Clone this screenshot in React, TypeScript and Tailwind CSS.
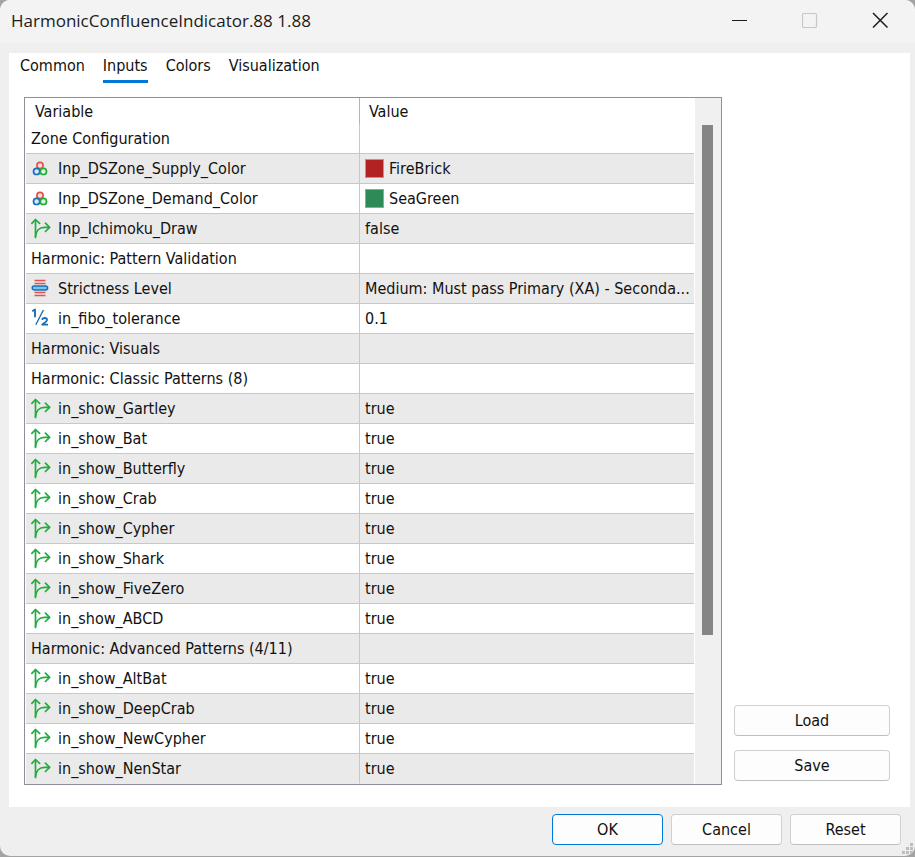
import { useState } from 'react'

type IconKind = 'color' | 'bool' | 'enum' | 'double'

interface Row {
  name: string
  icon?: IconKind
  value?: string
  swatch?: string
}

const TABS = ['Common', 'Inputs', 'Colors', 'Visualization']

const ROWS: Row[] = [
  { name: 'Zone Configuration' },
  { name: 'Inp_DSZone_Supply_Color', icon: 'color', value: 'FireBrick', swatch: 'bg-[#b22222]' },
  { name: 'Inp_DSZone_Demand_Color', icon: 'color', value: 'SeaGreen', swatch: 'bg-[#2e8b57]' },
  { name: 'Inp_Ichimoku_Draw', icon: 'bool', value: 'false' },
  { name: 'Harmonic: Pattern Validation' },
  { name: 'Strictness Level', icon: 'enum', value: 'Medium: Must pass Primary (XA) - Seconda...' },
  { name: 'in_fibo_tolerance', icon: 'double', value: '0.1' },
  { name: 'Harmonic: Visuals' },
  { name: 'Harmonic: Classic Patterns (8)' },
  { name: 'in_show_Gartley', icon: 'bool', value: 'true' },
  { name: 'in_show_Bat', icon: 'bool', value: 'true' },
  { name: 'in_show_Butterfly', icon: 'bool', value: 'true' },
  { name: 'in_show_Crab', icon: 'bool', value: 'true' },
  { name: 'in_show_Cypher', icon: 'bool', value: 'true' },
  { name: 'in_show_Shark', icon: 'bool', value: 'true' },
  { name: 'in_show_FiveZero', icon: 'bool', value: 'true' },
  { name: 'in_show_ABCD', icon: 'bool', value: 'true' },
  { name: 'Harmonic: Advanced Patterns (4/11)' },
  { name: 'in_show_AltBat', icon: 'bool', value: 'true' },
  { name: 'in_show_DeepCrab', icon: 'bool', value: 'true' },
  { name: 'in_show_NewCypher', icon: 'bool', value: 'true' },
  { name: 'in_show_NenStar', icon: 'bool', value: 'true' },
]

function TypeIcon({ kind }: { kind: IconKind }) {
  return (
    <svg width="20" height="22" viewBox="0 0 20 22" fill="none" className="shrink-0" aria-hidden="true">
      {kind === 'color' && (
        <g strokeWidth="1.7">
          <circle cx="9" cy="7.5" r="3.1" stroke="#e2514c" fill="#fbdcd8" />
          <circle cx="5.6" cy="13.4" r="3.1" stroke="#1a6fb5" fill="#d3ebfb" />
          <circle cx="12.4" cy="13.4" r="3.1" stroke="#1fae3c" fill="#dcf7df" />
        </g>
      )}
      {kind === 'bool' && (
        <g stroke="#1fae3c" strokeWidth="1.7" strokeLinecap="round" strokeLinejoin="round">
          <path d="M4.5 19.5V2" />
          <path d="M0.9 5.4L4.5 1.5L8.6 5.4" />
          <path d="M4.5 18.5C5 13 8.3 9.3 13.3 9.3H18.4" />
          <path d="M14.4 5.1L18.6 9.3L14.4 13.5" />
        </g>
      )}
      {kind === 'enum' && (
        <g>
          <path d="M3.5 2.5H14.5M3.5 5.5H14.5M3.5 14.5H14.5M3.5 17.5H14.5" stroke="#e2514c" strokeWidth="1.5" />
          <rect x="1.2" y="8.1" width="15.4" height="3.8" rx="1.9" fill="#7cc0ee" stroke="#1a6fb5" strokeWidth="1.5" />
        </g>
      )}
      {kind === 'double' && (
        <g stroke="#1a6fb5" strokeWidth="1.9" strokeLinejoin="round">
          <path d="M1.2 3.2L4 1.5V9.2" />
          <path d="M12.4 2L4.8 16.8" strokeWidth="1.4" />
          <path d="M11.2 11.8C11.6 9.4 16 9.4 16 12C16 13.6 13 15 11.2 16.6H17" />
        </g>
      )}
    </svg>
  )
}

function TitleBar() {
  return (
    <header className="flex h-[43px] items-center justify-between bg-[#f3f3f3] pl-[11px]">
      <h1 className="pb-0.5 font-['Open_Sans','Noto_Sans',sans-serif] text-[17px] text-[#1b1b1b]">
        HarmonicConfluenceIndicator.88 1.88
      </h1>
      <div className="flex h-full items-center pb-[3px]">
        <button aria-label="Minimize" className="flex h-full w-[70px] items-center justify-center">
          <svg width="16" height="16" viewBox="0 0 16 16"><path d="M0 8.5H15" stroke="#1b1b1b" /></svg>
        </button>
        <button aria-label="Maximize" disabled className="flex h-full w-[70px] items-center justify-center">
          <svg width="16" height="16" viewBox="0 0 16 16" fill="none">
            <rect x="0.5" y="1.5" width="14" height="14" rx="1.5" stroke="#c6c6c6" strokeWidth="1.2" />
          </svg>
        </button>
        <button aria-label="Close" className="flex h-full w-[70px] items-center justify-center">
          <svg width="16" height="16" viewBox="0 0 16 16"><path d="M1 1L15.5 15.5M15.5 1L1 15.5" stroke="#1b1b1b" strokeWidth="1.5" /></svg>
        </button>
      </div>
    </header>
  )
}

function InputsTable() {
  return (
    <div className="flex flex-1 border border-[#8b8f97]">
      <div className="min-w-0 flex-1 pl-px">
        <table className="w-full table-fixed border-separate border-spacing-0 text-left">
          <thead>
            <tr className="h-[26px]">
              <th className="border-r border-[#b4b4b4] p-0 pt-0.5 pl-[9px] font-normal">Variable</th>
              <th className="p-0 pt-0.5 pl-[9px] font-normal">Value</th>
            </tr>
          </thead>
          <tbody>
            {ROWS.map((row) => (
              <tr key={row.name} className="group h-[30px] even:bg-[#eaeaea]">
                <td className="border-r border-b border-[#c8c8c8] p-0 pl-[5px] group-last:border-b-[#eaeaea]">
                  <div className="flex items-center gap-[7px]">
                    {row.icon && <TypeIcon kind={row.icon} />}
                    <span>{row.name}</span>
                  </div>
                </td>
                <td className="border-b border-[#c8c8c8] p-0 pl-[5px] group-last:border-b-[#eaeaea]">
                  <div className="flex items-center gap-[5px]">
                    {row.swatch && <span className={`size-[19px] shrink-0 border border-[#a0a0a0] ${row.swatch}`} />}
                    <span className="truncate">{row.value}</span>
                  </div>
                </td>
              </tr>
            ))}
          </tbody>
        </table>
      </div>
      <div className="ml-px w-[26px] bg-[#f0f0f0] px-[7px] pt-[27px]">
        <div className="mr-px h-[510px] bg-[#858585]" />
      </div>
    </div>
  )
}

const button = 'rounded border border-[#d0d0d0] border-b-[#bfbfbf] bg-[#fdfdfd] h-[31px]'

export default function App() {
  const [tab, setTab] = useState('Inputs')

  return (
    <div className="min-h-screen bg-[#a3a3a3] pb-px font-['DejaVu_Sans_Condensed','Noto_Sans',sans-serif] text-base leading-5 text-[#111]">
      <div className="flex min-h-[calc(100vh-1px)] flex-col overflow-hidden rounded-[10px] bg-[#efefef]">
        <TitleBar />
        <main className="mt-[10px] mr-[5px] ml-[9px] flex flex-1 flex-col bg-white pb-[22px] pl-[15px]">
          <div role="tablist" className="-ml-1 flex gap-[18px]">
            {TABS.map((t) => (
              <button
                key={t}
                role="tab"
                aria-selected={t === tab}
                onClick={() => setTab(t)}
                className={`h-[30px] border-b-3 pb-0.5 ${t === tab ? 'border-[#0078d7]' : 'border-transparent'}`}
              >
                {t}
              </button>
            ))}
          </div>
          <div className="mt-[14px] flex flex-1 gap-3 pr-5">
            <InputsTable />
            <div className="flex w-[156px] flex-col justify-end gap-[14px] pb-1">
              <button className={button}>Load</button>
              <button className={button}>Save</button>
            </div>
          </div>
        </main>
        <footer className="relative flex justify-end gap-2 px-[14px] pt-[7px] pb-[11px]">
          <button className="h-[31px] w-[111px] rounded border border-[#0078d7] bg-[#fdfdfd]">OK</button>
          <button className={`${button} w-[111px]`}>Cancel</button>
          <button className={`${button} w-[111px]`}>Reset</button>
          <svg width="11" height="11" viewBox="0 0 11 11" fill="#bdbdbd" className="absolute right-0.5 bottom-0.5" aria-hidden="true">
            <path d="M8 0h3v3h-3zM4 4h3v3h-3zM8 4h3v3h-3zM0 8h3v3h-3zM4 8h3v3h-3zM8 8h3v3h-3z" />
          </svg>
        </footer>
      </div>
    </div>
  )
}
